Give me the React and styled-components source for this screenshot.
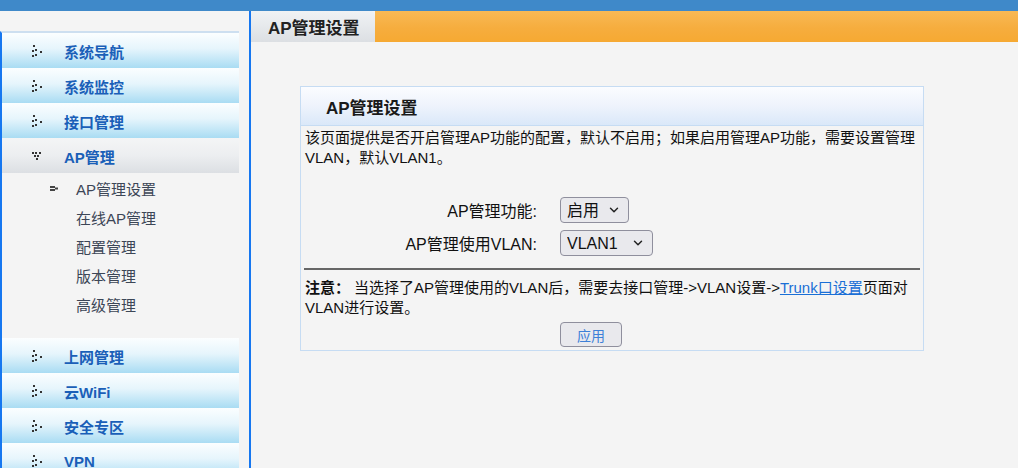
import React from 'react';
import styled, { createGlobalStyle } from 'styled-components';
import { ChevronDown } from 'lucide-react';

const FONT = `"Liberation Sans", "Noto Sans CJK SC", sans-serif`;

const menuTop = ['系统导航', '系统监控', '接口管理'];
const subMenu = ['AP管理设置', '在线AP管理', '配置管理', '版本管理', '高级管理'];
const menuBottom = ['上网管理', '云WiFi', '安全专区', 'VPN'];

const ArrowRight = () => (
    <svg width="11" height="13" viewBox="0 0 11 13">
        {[[1, 0], [0, 5], [0, 10], [3, 4], [3, 9], [8, 6]].map(([x, y], i) =>
            <rect key={i} x={x} y={y} width="2" height="2" fill="#333" />
        )}
    </svg>
);

const ArrowDown = () => (
    <svg width="11" height="9" viewBox="0 0 11 9">
        {[[0, 0], [3, 0], [7, 0], [2, 3], [5, 3], [4, 6]].map(([x, y], i) =>
            <rect key={i} x={x} y={y} width="2" height="2" fill="#333" />
        )}
    </svg>
);

const SubBullet = () => (
    <svg width="9" height="5" viewBox="0 0 9 5">
        <rect x="0" y="0" width="5" height="2" fill="#444" />
        <rect x="0" y="3" width="5" height="2" fill="#444" />
        <rect x="5" y="1.5" width="3" height="2" fill="#444" />
    </svg>
);

const App = () => {
    return (
        <Page>
            <GlobalStyle />
            <TopBar />
            <Body>
                <Sidebar>
                    <Nav>
                        {menuTop.map(name =>
                            <MenuItem key={name}>
                                <IconBox><ArrowRight /></IconBox>
                                {name}
                            </MenuItem>
                        )}
                        <MenuItem $open>
                            <IconBox><ArrowDown /></IconBox>
                            AP管理
                        </MenuItem>
                        <SubList>
                            {subMenu.map((name, i) =>
                                <SubItem key={name}>
                                    <SubIcon>{i === 0 && <SubBullet />}</SubIcon>
                                    {name}
                                </SubItem>
                            )}
                        </SubList>
                        {menuBottom.map(name =>
                            <MenuItem key={name}>
                                <IconBox><ArrowRight /></IconBox>
                                {name}
                            </MenuItem>
                        )}
                    </Nav>
                </Sidebar>

                <Main>
                    <TabBar>
                        <Tab>AP管理设置</Tab>
                        <TabFill />
                    </TabBar>

                    <Panel>
                        <PanelHeader>AP管理设置</PanelHeader>
                        <Desc>
                            该页面提供是否开启管理AP功能的配置，默认不启用；如果启用管理AP功能，需要设置管理VLAN，默认VLAN1。
                        </Desc>

                        <Form>
                            <Label>AP管理功能:</Label>
                            <SelectWrap $width={69}>
                                <Select defaultValue="on">
                                    <option value="on">启用</option>
                                    <option value="off">禁用</option>
                                </Select>
                                <Chevron><ChevronDown size={14} strokeWidth={2.5} /></Chevron>
                            </SelectWrap>

                            <Label>AP管理使用VLAN:</Label>
                            <SelectWrap $width={93}>
                                <Select defaultValue="1">
                                    <option value="1">VLAN1</option>
                                </Select>
                                <Chevron><ChevronDown size={14} strokeWidth={2.5} /></Chevron>
                            </SelectWrap>
                        </Form>

                        <Separator />

                        <Note>
                            <NoteTitle>注意：</NoteTitle>
                            当选择了AP管理使用的VLAN后，需要去接口管理-&gt;VLAN设置-&gt;<Link href="#">Trunk口设置</Link>页面对VLAN进行设置。
                        </Note>

                        <ButtonRow>
                            <ApplyButton>应用</ApplyButton>
                        </ButtonRow>
                    </Panel>
                </Main>
            </Body>
        </Page>
    );
};

export default App;

// CSS //
const GlobalStyle = createGlobalStyle`
html, body {
    margin: 0;
    padding: 0;
    height: 468px;
    overflow: hidden;
    background: #f4f4f4;
    font-family: ${FONT};
}
`;

const Page = styled.div`
display: flex;
flex-direction: column;
width: 1018px;
height: 468px;
overflow: hidden;
background: #f4f4f4;
`;

const TopBar = styled.div`
height: 11px;
flex-shrink: 0;
background: #3f89c9;
`;

const Body = styled.div`
display: flex;
flex: 1;
min-height: 0;
`;

const Sidebar = styled.div`
width: 249px;
flex-shrink: 0;
border-right: 2px solid #1677f0;
padding-top: 20px;
`;

const Nav = styled.div`
width: 237px;
border-left: 2px solid #1677f0;
border-top: 2px solid #cddff0;
`;

const MenuItem = styled.div`
display: flex;
align-items: center;
height: 35px;
padding-top: 1px;
box-sizing: border-box;
font-size: 15px;
font-weight: bold;
color: #1a5fb8;
background: ${p => p.$open
        ? 'linear-gradient(to bottom, #f4f5f6 0%, #eceef0 50%, #dcdfe3 100%)'
        : 'linear-gradient(to bottom, #fbfeff 0%, #e6f5fc 45%, #a9dcf3 100%)'};
`;

const IconBox = styled.span`
display: flex;
align-items: center;
justify-content: flex-start;
width: 32px;
margin-left: 30px;
`;

const SubList = styled.div`
display: flex;
flex-direction: column;
padding: 1px 0 19px;
`;

const SubItem = styled.div`
display: flex;
align-items: center;
height: 29px;
font-size: 15px;
color: #3c4656;
`;

const SubIcon = styled.span`
display: flex;
align-items: center;
width: 26px;
margin-left: 48px;
`;

const Main = styled.div`
flex: 1;
display: flex;
flex-direction: column;
`;

const TabBar = styled.div`
display: flex;
height: 31px;
`;

const Tab = styled.div`
width: 107px;
padding-left: 17px;
display: flex;
align-items: center;
font-size: 17px;
font-weight: bold;
color: #222;
border-top-right-radius: 5px;
background: linear-gradient(to bottom, #f0f2f4 0%, #e6e9ec 50%, #dcdfe3 100%);
`;

const TabFill = styled.div`
flex: 1;
background: linear-gradient(to bottom, #f8b955 0%, #f6ad3e 55%, #f6a932 100%);
`;

const Panel = styled.div`
margin: 44px 0 0 49px;
width: 622px;
border: 1px solid #c6dcf3;
padding-bottom: 3px;
`;

const PanelHeader = styled.div`
height: 38px;
display: flex;
align-items: center;
padding-left: 25px;
font-size: 17px;
font-weight: bold;
color: #1a1a1a;
border-bottom: 1px solid #c6dcf3;
background: linear-gradient(to bottom, #fbfcff 0%, #eef3fc 50%, #dae8f9 100%);
`;

const Desc = styled.div`
padding: 2px 4px 0;
font-size: 15px;
line-height: 20px;
color: #111;
`;

const Form = styled.div`
display: grid;
grid-template-columns: 236px auto;
column-gap: 23px;
row-gap: 7px;
align-items: center;
justify-items: start;
margin-top: 29px;
`;

const Label = styled.div`
justify-self: end;
font-size: 16px;
color: #111;
`;

const SelectWrap = styled.div`
position: relative;
width: ${p => p.$width}px;
height: 26px;
`;

const Select = styled.select`
appearance: none;
width: 100%;
height: 100%;
padding: 0 0 0 6px;
border: 1px solid #8f8f9d;
border-radius: 4px;
background: #e9e9ed;
font-family: ${FONT};
font-size: 16px;
color: #111;
`;

const Chevron = styled.span`
position: absolute;
right: 8px;
top: 6px;
display: flex;
color: #222;
pointer-events: none;
`;

const Separator = styled.div`
margin: 12px 3px 0;
height: 2px;
background: #666;
`;

const Note = styled.div`
margin-top: 8px;
padding: 0 4px;
font-size: 15px;
line-height: 20px;
color: #111;
`;

const NoteTitle = styled.b`
margin-right: 4px;
`;

const Link = styled.a`
color: #1a6fd6;
text-decoration: underline;
`;

const ButtonRow = styled.div`
display: flex;
padding-left: 259px;
margin-top: 4px;
`;

const ApplyButton = styled.button`
width: 62px;
height: 25px;
border: 1px solid #8f8f9d;
border-radius: 4px;
background: #e9e9ed;
font-family: ${FONT};
font-size: 14px;
color: #3d80d8;
`;
